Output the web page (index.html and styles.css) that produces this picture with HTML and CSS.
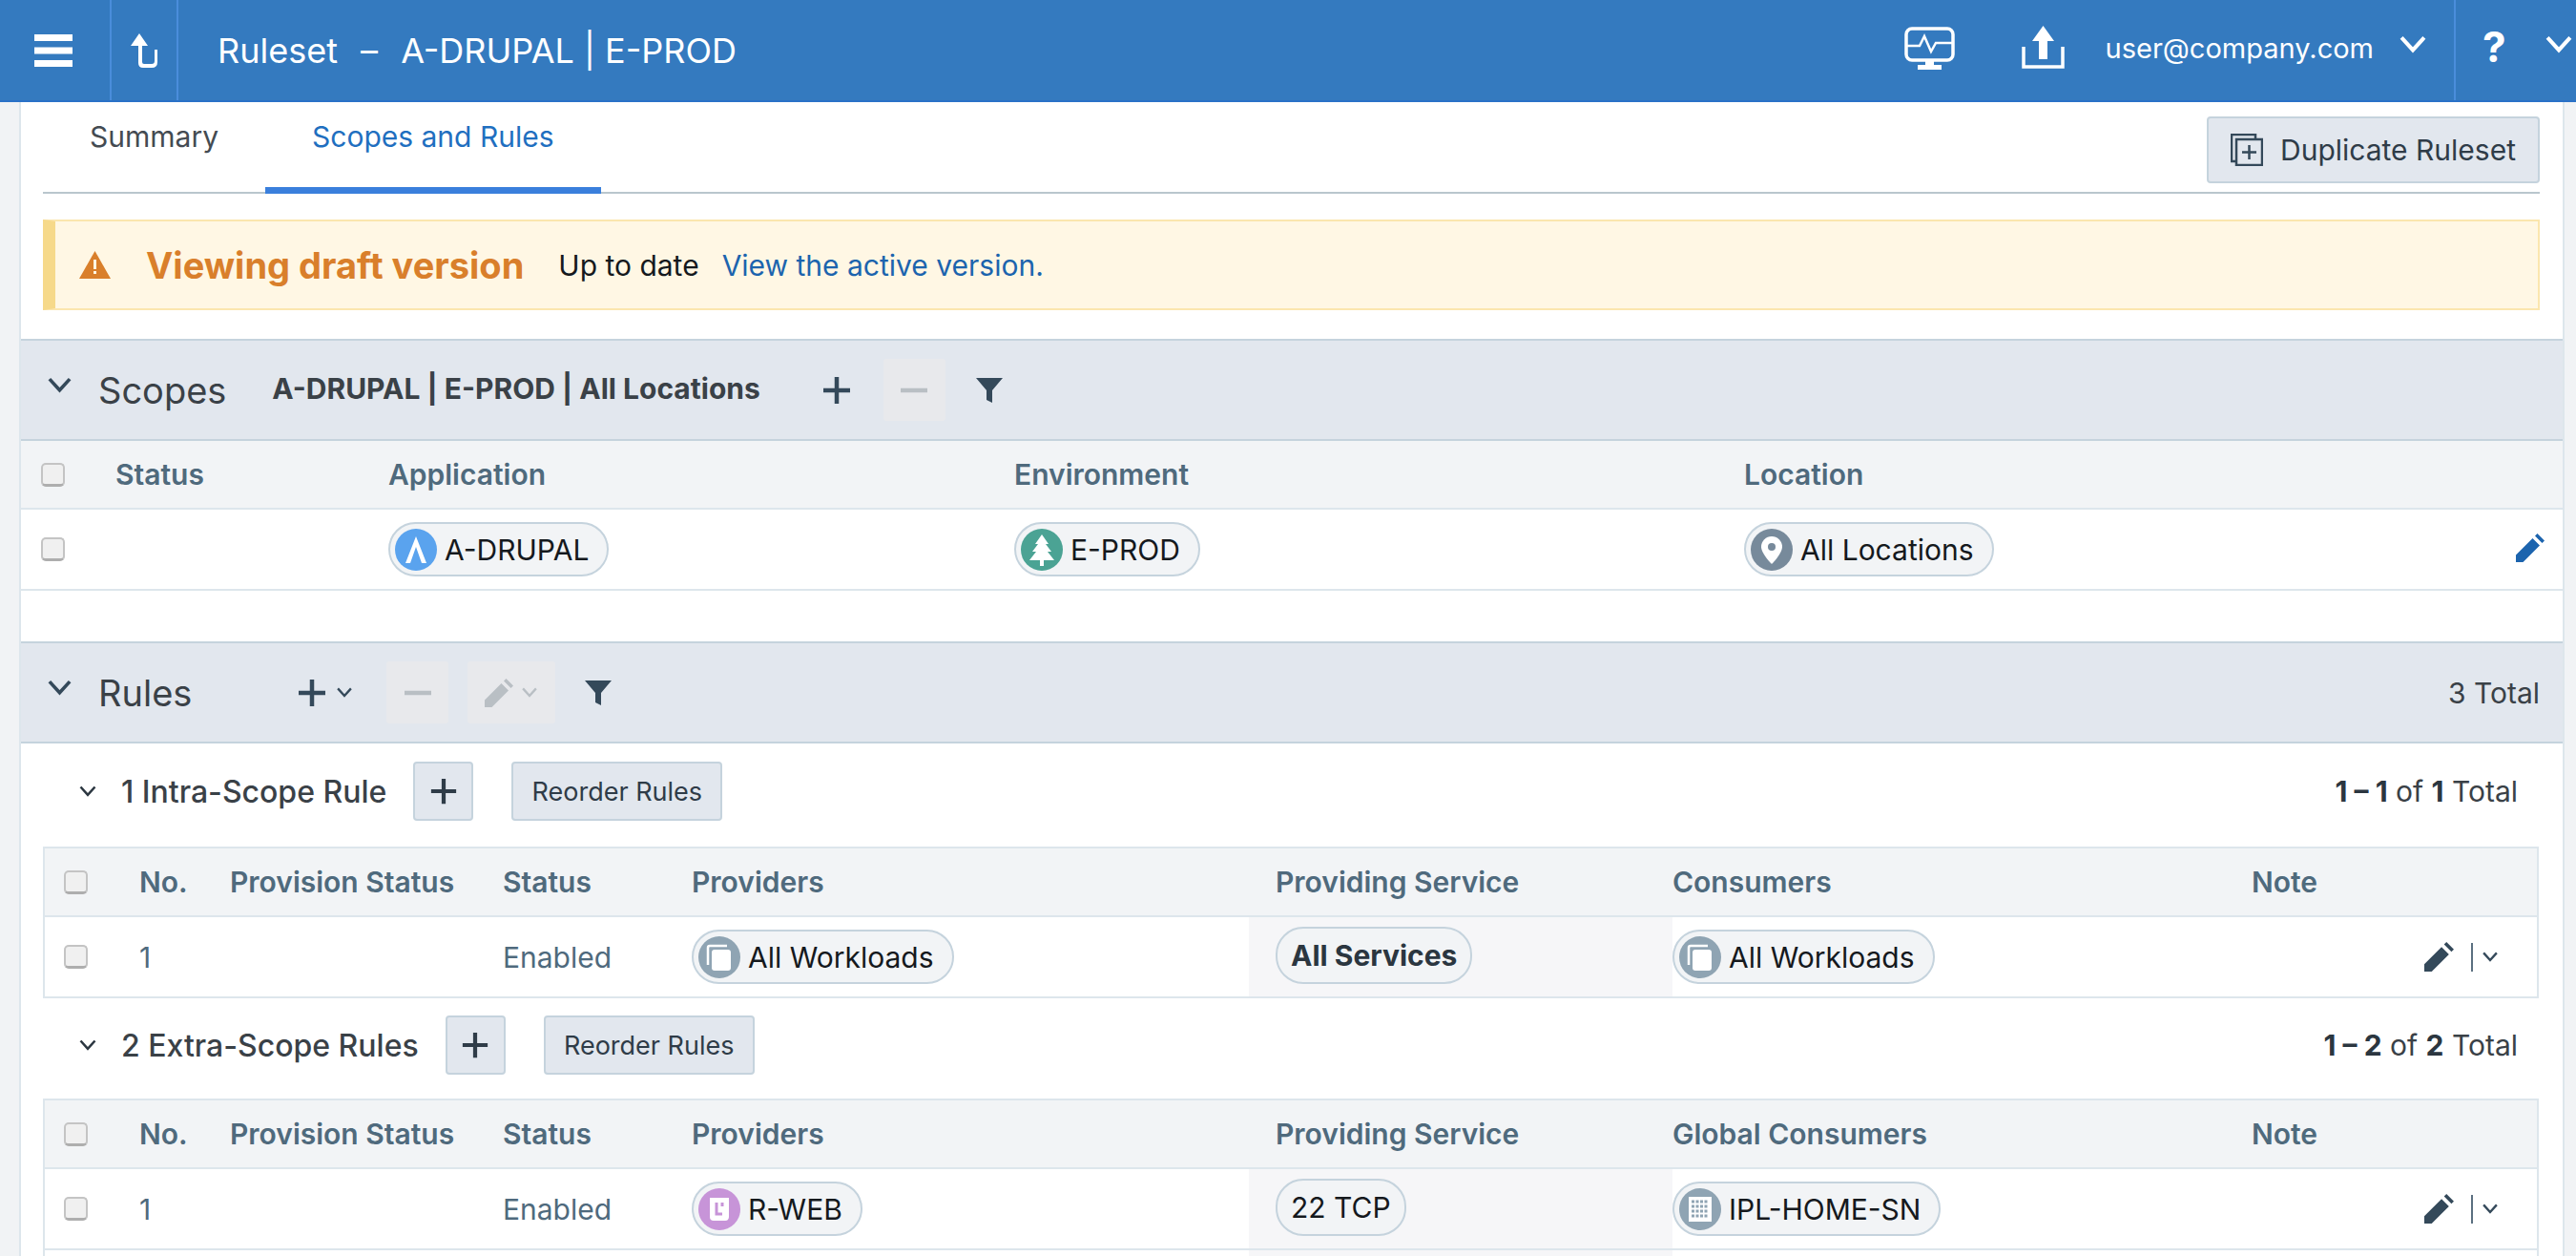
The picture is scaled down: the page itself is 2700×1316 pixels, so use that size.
FILE: index.html
```html
<!DOCTYPE html>
<html lang="en">
<head>
    <meta charset="UTF-8">
    <meta name="viewport" content="width=device-width, initial-scale=1.0">
    <title>Ruleset</title>
    <link rel="stylesheet" href="styles.css">
</head>
<body>
    <svg class="sprites" width="0" height="0">
        <symbol id="chev" viewBox="0 0 24 16"><path d="M2 2l10 11L22 2" fill="none" stroke="currentColor" stroke-width="3.4"/></symbol>
        <symbol id="plus" viewBox="0 0 32 32"><path d="M16 2v28M2 16h28" fill="none" stroke="currentColor" stroke-width="4.5"/></symbol>
        <symbol id="minus" viewBox="0 0 32 32"><path d="M2 16h28" fill="none" stroke="currentColor" stroke-width="4.5"/></symbol>
        <symbol id="filter" viewBox="0 0 28 28"><path d="M0 1h28L17 14v13l-6-3V14z" fill="currentColor"/></symbol>
        <symbol id="pen" viewBox="0 0 24 24"><path d="M0 24v-6L14 4l6 6L6 24zM16 2l2-2 6 6-2 2z" fill="currentColor"/></symbol>
        <symbol id="workloads" viewBox="0 0 44 44"><circle cx="22" cy="22" r="22" fill="#8fa4b3"/><path d="M10 30V12q0-2 2-2h18" fill="none" stroke="#fff" stroke-width="2.5"/><rect x="14" y="14" width="20" height="22" rx="3" fill="#fff"/></symbol>
    </svg>

    <header class="topbar">
        <div class="topbar-btn menu-btn">
            <svg width="40" height="34" viewBox="0 0 40 34"><path d="M0 0h40v7H0zM0 13.500h40v7H0zM0 27h40v7H0z" fill="#fff"/></svg>
        </div>
        <div class="topbar-btn up-btn">
            <svg width="30" height="36" viewBox="0 0 30 36"><path d="M10 0l9 13h-6v17q0 2 2 2h8q3 0 3-3V17h3v13q0 6-6 6h-9q-5 0-5-5V13H1z" fill="#fff"/></svg>
        </div>
        <div class="page-title">Ruleset <span class="title-dash">–</span> A-DRUPAL | E-PROD</div>
        <div class="topbar-right">
            <svg class="health-icon" width="53" height="46" viewBox="0 0 53 46"><rect x="2" y="2" width="49" height="33" rx="6" fill="none" stroke="#fff" stroke-width="3.500"/><path d="M2 20h14l5-10 7 16 5-9h18" fill="none" stroke="#fff" stroke-width="2.500"/><path d="M22 35h9v5h8v5H14v-5h8z" fill="#fff"/></svg>
            <svg class="upload-icon" width="45" height="45" viewBox="0 0 45 45"><path d="M22.500 0L34 16h-7v19h-9V16h-7z" fill="#fff"/><path d="M2 22v21h41V22" fill="none" stroke="#fff" stroke-width="3.500"/></svg>
            <span class="user-name">user@company.com</span>
            <svg class="top-chev" width="30" height="19"><use href="#chev"/></svg>
            <div class="help-box">
                <span class="help-mark">?</span>
                <svg class="top-chev" width="30" height="19"><use href="#chev"/></svg>
            </div>
        </div>
    </header>

    <main class="page">
        <div class="tabs">
            <a class="tab">Summary</a>
            <a class="tab tab-active">Scopes and Rules</a>
            <button class="btn duplicate-btn">
                <svg width="34" height="34" viewBox="0 0 34 34"><path d="M5 29H1V1h25v4" fill="none" stroke="#34495a" stroke-width="2.500"/><rect x="6" y="6" width="27" height="27" fill="none" stroke="#34495a" stroke-width="2.500"/><path d="M19.500 12v15M12 19.500h15" stroke="#34495a" stroke-width="2.500"/></svg>
                Duplicate Ruleset
            </button>
        </div>

        <div class="banner">
            <svg width="33" height="29" viewBox="0 0 33 29"><path d="M16.500 0L33 29H0z" fill="#d97f2b"/><path d="M15 9h3v10h-3zM15 21h3v3h-3z" fill="#fff7e4"/></svg>
            <span class="banner-title">Viewing draft version</span>
            <span class="banner-status">Up to date</span>
            <a class="banner-link">View the active version.</a>
        </div>

        <section class="section scopes">
            <div class="section-head">
                <svg class="head-chev" width="27" height="17"><use href="#chev"/></svg>
                <span class="section-title">Scopes</span>
                <span class="scope-name">A-DRUPAL | E-PROD | All Locations</span>
                <svg class="tool-plus" width="32" height="32"><use href="#plus"/></svg>
                <span class="tool-off minus-off"><svg width="32" height="32"><use href="#minus"/></svg></span>
                <svg class="tool-filter" width="28" height="28"><use href="#filter"/></svg>
            </div>
            <div class="scope-grid grid-head">
                <span class="cell"><span class="check"></span></span>
                <span class="cell">Status</span>
                <span class="cell">Application</span>
                <span class="cell">Environment</span>
                <span class="cell">Location</span>
            </div>
            <div class="scope-grid grid-row">
                <span class="cell"><span class="check"></span></span>
                <span class="cell"></span>
                <span class="cell">
                    <span class="chip">
                        <svg width="44" height="44" viewBox="0 0 44 44"><circle cx="22" cy="22" r="22" fill="#5aa3ee"/><path d="M22 8l11 28h-5l-6-17-6 17h-5z" fill="#fff"/></svg>
                        A-DRUPAL
                    </span>
                </span>
                <span class="cell">
                    <span class="chip">
                        <svg width="44" height="44" viewBox="0 0 44 44"><circle cx="22" cy="22" r="22" fill="#4ba394"/><path d="M22 6l7 10h-3l6 8h-4l7 9H24v6h-4v-6H9l7-9h-4l6-8h-3z" fill="#fff"/></svg>
                        E-PROD
                    </span>
                </span>
                <span class="cell">
                    <span class="chip">
                        <svg width="44" height="44" viewBox="0 0 44 44"><circle cx="22" cy="22" r="22" fill="#778a9b"/><path d="M22 8a11 11 0 0 1 11 11c0 7-11 18-11 18S11 26 11 19A11 11 0 0 1 22 8z" fill="#fff"/><circle cx="22" cy="19" r="4" fill="#778a9b"/></svg>
                        All Locations
                    </span>
                </span>
                <svg class="scope-pen" width="30" height="30"><use href="#pen"/></svg>
            </div>
        </section>

        <section class="section rules">
            <div class="section-head">
                <svg class="head-chev" width="27" height="17"><use href="#chev"/></svg>
                <span class="section-title rules-title">Rules</span>
                <svg class="tool-plus" width="32" height="32"><use href="#plus"/></svg>
                <svg class="small-chev" width="18" height="11"><use href="#chev"/></svg>
                <span class="tool-off rules-minus"><svg width="32" height="32"><use href="#minus"/></svg></span>
                <span class="tool-off pen-off">
                    <svg width="30" height="30"><use href="#pen"/></svg>
                    <svg width="18" height="11"><use href="#chev"/></svg>
                </span>
                <svg class="tool-filter rules-filter" width="28" height="28"><use href="#filter"/></svg>
                <span class="total">3 Total</span>
            </div>

            <div class="rule-group">
                <div class="group-head">
                    <svg class="small-chev" width="20" height="12"><use href="#chev"/></svg>
                    <span class="group-title">1 Intra-Scope Rule</span>
                    <button class="btn add-btn"><svg width="30" height="30"><use href="#plus"/></svg></button>
                    <button class="btn reorder-btn">Reorder Rules</button>
                    <span class="count"><b>1 – 1</b> of <b>1</b> Total</span>
                </div>
                <div class="rule-table">
                    <div class="rule-grid grid-head">
                        <span class="cell"><span class="check"></span></span>
                        <span class="cell">No.</span>
                        <span class="cell">Provision Status</span>
                        <span class="cell">Status</span>
                        <span class="cell">Providers</span>
                        <span class="cell service-head">Providing Service</span>
                        <span class="cell">Consumers</span>
                        <span class="cell">Note</span>
                    </div>
                    <div class="rule-grid grid-row">
                        <span class="cell"><span class="check"></span></span>
                        <span class="cell muted">1</span>
                        <span class="cell"></span>
                        <span class="cell muted">Enabled</span>
                        <span class="cell"><span class="chip"><svg width="44" height="44"><use href="#workloads"/></svg>All Workloads</span></span>
                        <span class="cell service-cell"><span class="chip service-chip strong">All Services</span></span>
                        <span class="cell"><span class="chip"><svg width="44" height="44"><use href="#workloads"/></svg>All Workloads</span></span>
                        <span class="cell row-actions">
                            <svg width="31" height="31"><use href="#pen"/></svg>
                            <span class="action-sep"></span>
                            <svg width="18" height="11"><use href="#chev"/></svg>
                        </span>
                    </div>
                </div>
            </div>

            <div class="rule-group">
                <div class="group-head">
                    <svg class="small-chev" width="20" height="12"><use href="#chev"/></svg>
                    <span class="group-title">2 Extra-Scope Rules</span>
                    <button class="btn add-btn"><svg width="30" height="30"><use href="#plus"/></svg></button>
                    <button class="btn reorder-btn">Reorder Rules</button>
                    <span class="count"><b>1 – 2</b> of <b>2</b> Total</span>
                </div>
                <div class="rule-table">
                    <div class="rule-grid grid-head">
                        <span class="cell"><span class="check"></span></span>
                        <span class="cell">No.</span>
                        <span class="cell">Provision Status</span>
                        <span class="cell">Status</span>
                        <span class="cell">Providers</span>
                        <span class="cell service-head">Providing Service</span>
                        <span class="cell">Global Consumers</span>
                        <span class="cell">Note</span>
                    </div>
                    <div class="rule-grid grid-row">
                        <span class="cell"><span class="check"></span></span>
                        <span class="cell muted">1</span>
                        <span class="cell"></span>
                        <span class="cell muted">Enabled</span>
                        <span class="cell">
                            <span class="chip">
                                <svg width="44" height="44" viewBox="0 0 44 44"><circle cx="22" cy="22" r="22" fill="#c794d8"/><path d="M12 10h20v20q0 4-4 4H16q-4 0-4-4z" fill="#fff"/><path d="M19 15v12h6" fill="none" stroke="#c794d8" stroke-width="3"/><path d="M25 15v4" stroke="#c794d8" stroke-width="3"/></svg>
                                R-WEB
                            </span>
                        </span>
                        <span class="cell service-cell"><span class="chip service-chip">22 TCP</span></span>
                        <span class="cell">
                            <span class="chip">
                                <svg width="44" height="44" viewBox="0 0 44 44"><circle cx="22" cy="22" r="22" fill="#8fa4b3"/><rect x="10" y="9" width="24" height="26" fill="#fff"/><path d="M13 14h18M13 19h18M13 24h18M13 29h18" stroke="#8fa4b3" stroke-width="3" stroke-dasharray="3 1.500"/></svg>
                                IPL-HOME-SN
                            </span>
                        </span>
                        <span class="cell row-actions">
                            <svg width="31" height="31"><use href="#pen"/></svg>
                            <span class="action-sep"></span>
                            <svg width="18" height="11"><use href="#chev"/></svg>
                        </span>
                    </div>
                    <div class="rule-grid grid-row">
                        <span class="cell"></span>
                        <span class="cell"></span>
                        <span class="cell"></span>
                        <span class="cell"></span>
                        <span class="cell"></span>
                        <span class="cell service-cell"></span>
                    </div>
                </div>
            </div>
        </section>
    </main>
</body>
</html>
```

FILE: styles.css
```css
html, body {
    height: 100%;
    margin: 0;
    overflow: hidden;
}
body {
    background-color: #f1f3f5;
    color: #2b3640;
    font-family: Inter, "Liberation Sans", sans-serif;
    font-size: 30px;
    display: flex;
    flex-direction: column;
}
.sprites {
    position: absolute;
}
svg {
    display: block;
    flex: none;
}

/* top bar */
.topbar {
    flex: none;
    height: 105px;
    background-color: #347abf;
    border-bottom: 2px solid #2a72c8;
    color: #fff;
    display: flex;
    align-items: stretch;
}
.topbar-btn {
    display: flex;
    align-items: center;
    justify-content: center;
    border-right: 2px solid #4a8ddb;
}
.menu-btn {
    width: 117px;
    padding-right: 3px;
    box-sizing: border-box;
}
.up-btn {
    width: 68px;
}
.page-title {
    margin-left: 41px;
    align-self: center;
    font-size: 36px;
    white-space: pre;
}
.title-dash {
    margin: 0 14px;
}
.topbar-right {
    margin-left: auto;
    display: flex;
    align-items: center;
}
.health-icon {
    margin-top: -4px;
}
.upload-icon {
    margin: -6px 0 0 70px;
}
.user-name {
    margin: -4px 0 0 43px;
    font-size: 29px;
}
.top-chev {
    margin-top: -12px;
    margin-left: 26px;
}
.help-box {
    align-self: stretch;
    display: flex;
    align-items: center;
    margin-left: 28px;
    width: 128px;
    box-sizing: border-box;
    border-left: 2px solid #4a8ddb;
}
.help-mark {
    margin: -8px 0 0 28px;
    font-size: 44px;
    font-weight: 700;
}
.help-box .top-chev {
    margin-left: 40px;
}

/* page */
.page {
    flex: 1;
    min-height: 0;
    overflow: hidden;
    margin: 0 12px 0 20px;
    background-color: #fff;
    border-left: 2px solid #dde6ec;
    border-right: 2px solid #dde6ec;
}
.tabs {
    margin: 0 24px 0 23px;
    height: 94px;
    display: flex;
    border-bottom: 2px solid #b9c6cd;
    box-sizing: content-box;
}
.tab {
    padding: 0 49px;
    height: 87px;
    line-height: 72px;
    color: #444b52;
    box-sizing: border-box;
}
.tab-active {
    height: 96px;
    margin-left: 0;
    border-bottom: 7px solid #3a7fdc;
    color: #1f6fc0;
}
.btn {
    font: inherit;
    background-color: #e2e7ee;
    border: 2px solid #c5d3dd;
    border-radius: 4px;
    color: #2f3c48;
    padding: 0;
}
.duplicate-btn {
    margin: 15px 0 0 auto;
    width: 349px;
    height: 70px;
    display: flex;
    align-items: center;
    justify-content: center;
    gap: 18px;
}

/* banner */
.banner {
    margin: 27px 24px 0 23px;
    height: 95px;
    box-sizing: border-box;
    padding-left: 25px;
    display: flex;
    align-items: center;
    background-color: #fff7e4;
    border: 2px solid #fbe6ae;
    border-left: 13px solid #f6d98a;
}
.banner-title {
    margin-left: 37px;
    font-size: 38px;
    font-weight: 700;
    color: #d97f2b;
}
.banner-status {
    margin-left: 36px;
    color: #15191d;
}
.banner-link {
    margin-left: 24px;
    color: #1c64ae;
}

/* sections */
.scopes {
    margin-top: 30px;
}
.section-head {
    height: 103px;
    background-color: #e2e7ee;
    border-top: 2px solid #c5d3dd;
    border-bottom: 2px solid #c5d3dd;
    display: flex;
    align-items: center;
    color: #34495a;
}
.head-chev {
    margin: -10px 0 0 27px;
}
.section-title {
    margin-left: 27px;
    font-size: 38px;
    color: #3a4147;
}
.scope-name {
    margin: -4px 0 0 48px;
    font-weight: 700;
    color: #3a4147;
}
.tool-plus {
    margin-left: 64px;
}
.tool-off {
    display: flex;
    align-items: center;
    justify-content: center;
    height: 65px;
    border-radius: 3px;
    background-color: #e8e9ec;
    color: #b9bfc4;
}
.minus-off {
    width: 65px;
    margin-left: 33px;
}
.tool-filter {
    margin-left: 32px;
}
.scope-grid {
    display: grid;
    grid-template-columns: 99px 286px 656px 765px 1fr;
}
.grid-head, .grid-row {
    align-items: center;
    border-bottom: 2px solid #dde6ec;
    position: relative;
}
.grid-head {
    height: 70px;
    background-color: #f2f4f6;
    color: #4f6a7d;
    font-weight: 600;
}
.grid-row {
    height: 83px;
}
.cell {
    display: flex;
    align-items: center;
    white-space: nowrap;
}
.check {
    width: 25px;
    height: 25px;
    margin-left: 21px;
    box-sizing: border-box;
    background-color: #f0f0f0;
    border: 2px solid #c4c4c4;
    border-bottom: 3px solid #aeaeae;
    border-radius: 5px;
}
.chip {
    display: inline-flex;
    align-items: center;
    gap: 8px;
    height: 57px;
    padding: 0 19px 0 5px;
    box-sizing: border-box;
    background-color: #f2f4f6;
    border: 2px solid #c5d3dd;
    border-radius: 29px;
    color: #15191d;
}
.scope-pen {
    position: absolute;
    right: 19px;
    top: 25px;
    color: #1c64ae;
}

/* rules */
.rules {
    margin-top: 53px;
}
.rules-title {
    margin-left: 27px;
}
.rules .tool-plus {
    margin-left: 110px;
}
.small-chev {
    margin-left: 9px;
}
.rules-minus {
    width: 65px;
    margin-left: 35px;
}
.pen-off {
    width: 92px;
    margin-left: 20px;
    gap: 8px;
}
.rules-filter {
    margin-left: 31px;
}
.total {
    margin-left: auto;
    margin-right: 24px;
    color: #3a4147;
}
.rule-group {
    padding: 0 25px 0 23px;
}
.group-head {
    display: flex;
    align-items: center;
    height: 62px;
    padding: 19px 0 27px;
}
.rule-group + .rule-group .group-head {
    padding-top: 18px;
    padding-bottom: 25px;
}
.group-head .small-chev {
    margin-left: 37px;
}
.group-title {
    margin-left: 25px;
    font-size: 32px;
    font-weight: 500;
    color: #3a4147;
}
.add-btn {
    width: 63px;
    height: 62px;
    margin-left: 28px;
    display: flex;
    align-items: center;
    justify-content: center;
}
.reorder-btn {
    width: 221px;
    height: 62px;
    margin-left: 40px;
    font-size: 27px;
}
.count {
    margin-left: auto;
    margin-right: 22px;
    color: #3a4147;
}
.count b {
    color: #2b3640;
}
.rule-table {
    border: 2px solid #dde6ec;
    border-bottom: 0;
}
.rule-grid {
    display: grid;
    grid-template-columns: 99px 95px 286px 198px 584px 444px 607px 1fr;
}
.rule-grid .check {
    margin-left: 20px;
}
.muted {
    color: #4f6a7d;
}
.service-head {
    padding-left: 28px;
}
.service-cell {
    align-self: stretch;
    background-color: #f6f6f8;
    padding-left: 28px;
    align-items: flex-start;
    padding-top: 10px;
}
.service-chip {
    height: 60px;
    padding: 0 14px;
}
.strong {
    font-weight: 700;
    color: #2b3640;
}
.row-actions {
    justify-content: flex-end;
    color: #34495a;
    padding-right: 40px;
}
.action-sep {
    width: 2px;
    height: 30px;
    margin: 0 9px 0 18px;
    background-color: #5b7080;
}
```
